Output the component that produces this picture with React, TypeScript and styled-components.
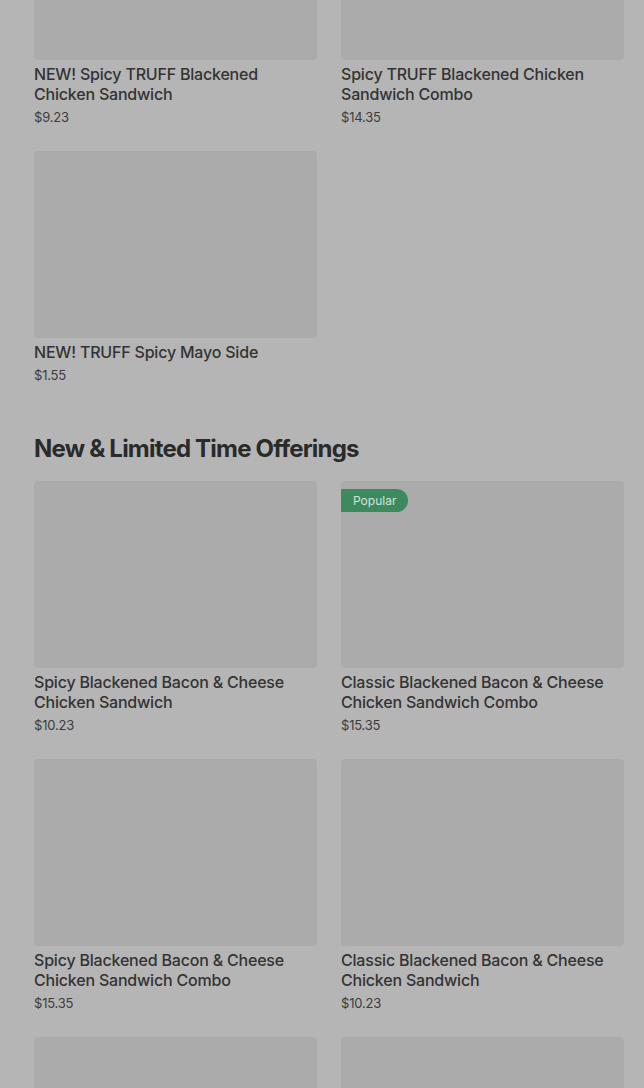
import React from "react";
import styled, { createGlobalStyle } from "styled-components";

type Item = {
  name: string;
  price: string;
  popular?: boolean;
};

const GlobalStyle = createGlobalStyle`
  html, body {
    margin: 0;
    padding: 0;
    background: #b5b5b5;
  }
  body {
    font-family: Inter, "Open Sans", sans-serif;
    overflow: hidden;
  }
`;

const Page = styled.div`
  width: 644px;
  height: 1088px;
  overflow: hidden;
  background: #b5b5b5;
`;

// the page is scrolled: the first cards are cut at the top
const Scroller = styled.div`
  margin-top: -127px;
  padding: 0 20px 0 34px;
`;

const Section = styled.section`
  padding-bottom: 40px;
`;

const SectionTitle = styled.h2`
  margin: 9px 0 16px;
  font-size: 24px;
  line-height: 32px;
  font-weight: 700;
  letter-spacing: -0.8px;
  color: #2a2a2a;
`;

const Grid = styled.div`
  display: grid;
  grid-template-columns: 283px 283px;
  column-gap: 24px;
  row-gap: 25px;
`;

const Card = styled.div`
  display: flex;
  flex-direction: column;
`;

const ImageBox = styled.div`
  position: relative;
  height: 187px;
  border-radius: 4px;
  background: #ababab;
`;

const Badge = styled.span`
  position: absolute;
  top: 8px;
  left: 0;
  padding: 0 12px;
  height: 23px;
  line-height: 23px;
  font-size: 12px;
  color: #d3e3d8;
  background: #3d8a5f;
  border-radius: 0 12px 12px 0;
`;

const Title = styled.div`
  margin-top: 4px;
  font-size: 16px;
  line-height: 20px;
  font-weight: 500;
  letter-spacing: -0.2px;
  color: #333333;
`;

const Price = styled.div`
  margin-top: 4px;
  font-size: 13px;
  line-height: 18px;
  letter-spacing: -0.2px;
  color: #3c3c3c;
`;

const truffItems: Item[] = [
  { name: "NEW! Spicy TRUFF Blackened Chicken Sandwich", price: "$9.23" },
  { name: "Spicy TRUFF Blackened Chicken Sandwich Combo", price: "$14.35" },
  { name: "NEW! TRUFF Spicy Mayo Side", price: "$1.55" },
];

const limitedItems: Item[] = [
  { name: "Spicy Blackened Bacon & Cheese Chicken Sandwich", price: "$10.23" },
  {
    name: "Classic Blackened Bacon & Cheese Chicken Sandwich Combo",
    price: "$15.35",
    popular: true,
  },
  { name: "Spicy Blackened Bacon & Cheese Chicken Sandwich Combo", price: "$15.35" },
  { name: "Classic Blackened Bacon & Cheese Chicken Sandwich", price: "$10.23" },
  { name: "Classic Blackened Chicken Sandwich", price: "$8.19" },
  { name: "Spicy Blackened Chicken Sandwich", price: "$8.19" },
];

function MenuCard({ item }: { item: Item }) {
  return (
    <Card>
      <ImageBox>{item.popular && <Badge>Popular</Badge>}</ImageBox>
      <Title>{item.name}</Title>
      <Price>{item.price}</Price>
    </Card>
  );
}

export default function App() {
  return (
    <Page>
      <GlobalStyle />
      <Scroller>
        <Section>
          <Grid>
            {truffItems.map((item) => (
              <MenuCard key={item.name} item={item} />
            ))}
          </Grid>
        </Section>
        <Section>
          <SectionTitle>New &amp; Limited Time Offerings</SectionTitle>
          <Grid>
            {limitedItems.map((item) => (
              <MenuCard key={item.name} item={item} />
            ))}
          </Grid>
        </Section>
      </Scroller>
    </Page>
  );
}
